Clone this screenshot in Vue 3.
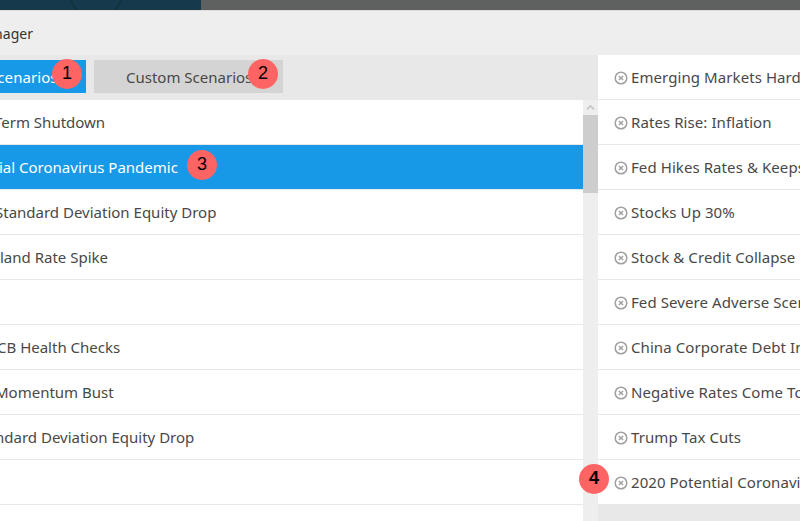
<script setup>
const left = [
  { t: 'Term Shutdown', x: -6 },
  { t: 'ial Coronavirus Pandemic', x: -1, sel: true },
  { t: 'Standard Deviation Equity Drop', x: -5 },
  { t: 'land Rate Spike', x: 0 },
  { t: '', x: 0 },
  { t: 'CB Health Checks', x: -3 },
  { t: 'Momentum Bust', x: -5 },
  { t: 'ndard Deviation Equity Drop', x: -5 },
  { t: '', x: 0 },
  { t: '', x: 0 }
]
const right = [
  'Emerging Markets Hard Landing',
  'Rates Rise: Inflation',
  'Fed Hikes Rates & Keeps Rising',
  'Stocks Up 30%',
  'Stock & Credit Collapse',
  'Fed Severe Adverse Scenario',
  'China Corporate Debt Implosion',
  'Negative Rates Come To US',
  'Trump Tax Cuts',
  '2020 Potential Coronavirus Pandemic'
]
const badges = [
  { n: 1, c: 'b1' },
  { n: 2, c: 'b2' },
  { n: 3, c: 'b3' },
  { n: 4, c: 'b4' }
]
</script>

<template>
  <div class="page">
    <div class="topbar">
      <div class="top-dark">
        <svg class="arc" width="201" height="10" viewBox="0 0 201 10">
          <path d="M71 0 A26 26 0 0 0 121 0" fill="none" stroke="#123240" stroke-width="2" />
        </svg>
      </div>
      <div class="top-gray"></div>
    </div>
    <div class="title">nager</div>
    <div class="main">
      <div class="leftcol">
        <div class="tabs">
          <div class="tab active"><span class="clip-s">Scenarios</span></div>
          <div class="tab custom">Custom Scenarios</div>
        </div>
        <div class="listwrap">
          <div class="list">
            <div v-for="(r, i) in left" :key="i" class="row" :class="{ sel: r.sel }">
              <span :style="{ marginLeft: r.x + 'px' }">{{ r.t }}</span>
            </div>
          </div>
          <div class="scroll">
            <svg class="arrow" width="15" height="15" viewBox="0 0 15 15">
              <path d="M4 9.5 L7.5 6 L11 9.5" fill="none" stroke="#c4c4c4" stroke-width="1.6" />
            </svg>
            <div class="thumb"></div>
          </div>
        </div>
      </div>
      <div class="rightcol">
        <div v-for="(t, i) in right" :key="i" class="ritem">
          <svg class="x" width="14" height="14" viewBox="0 0 14 14">
            <circle cx="7" cy="7" r="5.8" fill="none" stroke="#a0a0a0" stroke-width="1.5" />
            <path d="M4.9 4.9 L9.1 9.1 M9.1 4.9 L4.9 9.1" stroke="#a0a0a0" stroke-width="1.4" />
          </svg>
          <span>{{ t }}</span>
        </div>
        <div class="rfill"></div>
      </div>
    </div>
    <div v-for="b in badges" :key="b.n" class="badge" :class="b.c">{{ b.n }}</div>
  </div>
</template>

<style>
html, body { margin: 0; overflow: hidden; }
</style>

<style scoped>
.page {
  position: relative;
  width: 800px;
  height: 521px;
  overflow: hidden;
  background: #eee;
  font-family: "Noto Sans", "Open Sans", sans-serif;
  font-size: 15px;
  letter-spacing: 0.08px;
  color: #484848;
  display: flex;
  flex-direction: column;
}
.topbar { display: flex; height: 10px; flex: none; border-bottom: 1px solid #ddd; }
.top-dark { width: 201px; background: #163a4c; overflow: hidden; }
.arc { display: block; }
.top-gray { flex: 1; background: #5f6161; }
.title {
  flex: none;
  height: 44px;
  line-height: 46px;
  margin-left: -6px;
  font-size: 14px;
  color: #333;
}
.main { flex: 1; display: flex; min-height: 0; }
.leftcol { width: 598px; flex: none; display: flex; flex-direction: column; }
.tabs {
  flex: none;
  height: 45px;
  background: #e8e8e8;
  display: flex;
  gap: 8px;
  padding-top: 5px;
  box-sizing: border-box;
}
.tab { height: 33px; line-height: 34px; box-sizing: border-box; white-space: nowrap; overflow: hidden; }
.tab.active { width: 86px; background: #1799e8; color: #fff; }
.clip-s { margin-left: -11px; }
.tab.custom { width: 189px; background: #d4d4d4; padding-left: 32px; letter-spacing: 0; }
.listwrap { flex: 1; display: flex; min-height: 0; }
.list { width: 583px; flex: none; background: #fff; overflow: hidden; letter-spacing: 0; }
.row {
  height: 45px;
  line-height: 45px;
  box-sizing: border-box;
  border-bottom: 1px solid #e8e8e8;
  white-space: nowrap;
}
.row.sel { background: #1799e8; color: #fff; }
.scroll { width: 15px; flex: none; background: #eee; }
.arrow { display: block; }
.thumb { height: 78px; background: #cdcdcd; }
.rightcol { flex: 1; display: flex; flex-direction: column; background: #e8e8e8; }
.ritem {
  flex: none;
  height: 45px;
  background: #fff;
  border-bottom: 1px solid #e8e8e8;
  box-sizing: border-box;
  display: flex;
  align-items: center;
  padding-left: 16px;
  gap: 3px;
  white-space: nowrap;
  overflow: hidden;
}
.rfill { flex: 1; }
.x { flex: none; position: relative; top: 1px; }
.badge {
  position: absolute;
  width: 30px;
  height: 30px;
  border-radius: 50%;
  background: #ff6464;
  color: #000;
  font-family: "Liberation Sans", Arial, sans-serif;
  font-size: 18px;
  line-height: 28px;
  text-align: center;
}
.b1 { left: 52px; top: 59px; }
.b2 { left: 248px; top: 59px; }
.b3 { left: 187px; top: 150px; }
.b4 { left: 579px; top: 464px; font-weight: 700; }
</style>
